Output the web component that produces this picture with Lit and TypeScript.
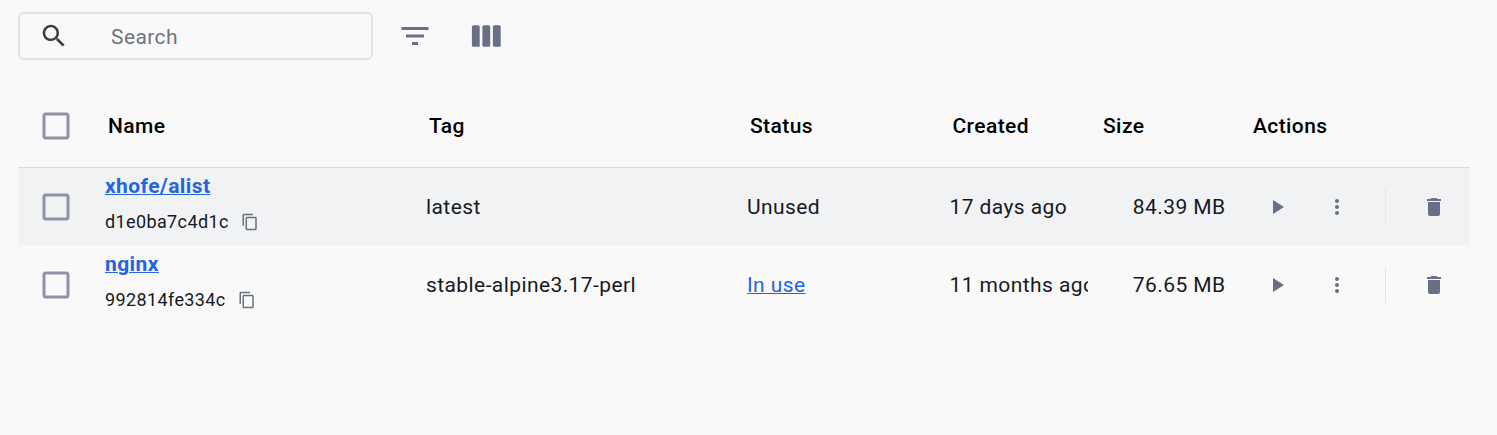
import { LitElement, html, css, svg } from "lit";
import { customElement, property } from "lit/decorators.js";

const ICONS = {
  search: svg`<path d="M15.5 14h-.79l-.28-.27C15.41 12.59 16 11.11 16 9.5 16 5.91 13.09 3 9.5 3S3 5.91 3 9.5 5.91 16 9.5 16c1.61 0 3.09-.59 4.23-1.57l.27.28v.79l5 4.99L20.49 19l-4.99-5zm-6 0C7.01 14 5 11.99 5 9.5S7.01 5 9.5 5 14 7.01 14 9.5 11.99 14 9.5 14z"/>`,
  filter: svg`<path d="M10 18h4v-2h-4v2zM3 6v2h18V6H3zm3 7h12v-2H6v2z"/>`,
  columns: svg`<rect x="2.6" y="4.9" width="5.2" height="14.2" rx="1"/><rect x="9.6" y="4.9" width="5.2" height="14.2" rx="1"/><rect x="16.6" y="4.9" width="5.2" height="14.2" rx="1"/>`,
  box: svg`<path d="M19 5v14H5V5h14m0-2H5c-1.1 0-2 .9-2 2v14c0 1.1.9 2 2 2h14c1.1 0 2-.9 2-2V5c0-1.1-.9-2-2-2z"/>`,
  copy: svg`<path d="M16 1H4c-1.1 0-2 .9-2 2v14h2V3h12V1zm3 4H8c-1.1 0-2 .9-2 2v14c0 1.1.9 2 2 2h11c1.1 0 2-.9 2-2V7c0-1.1-.9-2-2-2zm0 16H8V7h11v14z"/>`,
  play: svg`<path d="M8 5v14l11-7z"/>`,
  more: svg`<path d="M12 8c1.1 0 2-.9 2-2s-.9-2-2-2-2 .9-2 2 .9 2 2 2zm0 2c-1.1 0-2 .9-2 2s.9 2 2 2 2-.9 2-2-.9-2-2-2zm0 6c-1.1 0-2 .9-2 2s.9 2 2 2 2-.9 2-2-.9-2-2-2z"/>`,
  trash: svg`<path d="M6 19c0 1.1.9 2 2 2h8c1.1 0 2-.9 2-2V7H6v12zM19 4h-3.5l-1-1h-5l-1 1H5v2h14V4z"/>`,
};

@customElement("ui-icon")
export class UiIcon extends LitElement {
  @property() name: keyof typeof ICONS = "search";
  static styles = css`
    :host { display: block; flex: none; width: 24px; height: 24px; }
    svg { display: block; width: 100%; height: 100%; fill: currentColor; }
  `;
  render() {
    return html`<svg viewBox="0 0 24 24" aria-hidden="true">${ICONS[this.name]}</svg>`;
  }
}

interface ImageRow {
  name: string;
  id: string;
  tag: string;
  status: string;
  created: string;
  size: string;
  active?: boolean;
}

const ROWS: ImageRow[] = [
  { name: "xhofe/alist", id: "d1e0ba7c4d1c", tag: "latest", status: "Unused", created: "17 days ago", size: "84.39 MB", active: true },
  { name: "nginx", id: "992814fe334c", tag: "stable-alpine3.17-perl", status: "In use", created: "11 months ago", size: "76.65 MB" },
];

@customElement("app-root")
export class AppRoot extends LitElement {
  static styles = css`
    :host {
      display: block;
      box-sizing: border-box;
      height: 435px;
      padding: 12px 27px 0 18px;
      overflow: hidden;
      background: #f9f9fa;
      color: #17191e;
      font: 400 21px/30px Roboto, sans-serif;
      letter-spacing: 0.41px;
      white-space: nowrap;
    }
    .toolbar { display: flex; align-items: center; height: 48px; color: #696f85; }
    .search {
      display: flex; align-items: center; box-sizing: border-box;
      width: 355px; height: 48px; padding-left: 19px;
      border: 2px solid #e1e2e4; border-radius: 6px;
    }
    .search ui-icon { width: 30px; height: 30px; color: #393c42; }
    .placeholder { margin-left: 42px; padding-top: 2px; color: #6f747f; }
    .tool { width: 36px; height: 36px; margin-left: 24px; }
    .tool + .tool { margin-left: 35px; }
    .row {
      display: grid; align-items: center; height: 78px;
      grid-template-columns: 72px 321px 321px 202.5px 150.5px 150px 235px;
    }
    .head {
      height: 83px; margin-top: 25px; padding-bottom: 1px; box-sizing: border-box;
      border-bottom: 1px solid #d8dadd;
      color: #000; font-weight: 500;
    }
    .active { background: linear-gradient(#f0f2f4, #f0f2f4) 0 0 / 100% 77px no-repeat; }
    .cell { padding-left: 15px; }
    .head .cell { padding-left: 18px; }
    .check { width: 36px; height: 36px; margin-left: 20px; color: #8f93a4; }
    .identity { padding-bottom: 6px; }
    .name { display: block; height: 36px; line-height: 36px; font-weight: 700; }
    .link { color: #2463e4; text-decoration: underline; text-decoration-thickness: 1px; text-underline-offset: 1px; }
    .id { display: flex; align-items: center; height: 36px; font-size: 18px; letter-spacing: 0.38px; }
    .id ui-icon { width: 18px; height: 18px; margin-left: 12px; color: #696f85; }
    .created { width: 138.5px; overflow: hidden; }
    .size { text-align: right; padding-right: 9.5px; }
    .actions { display: flex; align-items: center; padding-left: 30px; color: #696f85; }
    .more { margin-left: 36px; }
    .divider { width: 1px; height: 36px; margin: 0 36px; background: #e1e4e9; }
  `;

  private row(r: ImageRow) {
    return html`<div class="row ${r.active ? "active" : ""}">
      <ui-icon class="check" name="box"></ui-icon>
      <div class="cell identity">
        <span class="name"><span class="link">${r.name}</span></span>
        <div class="id"><span>${r.id}</span><ui-icon name="copy"></ui-icon></div>
      </div>
      <div class="cell">${r.tag}</div>
      <div class="cell"><span class=${r.status === "In use" ? "link" : ""}>${r.status}</span></div>
      <div class="cell created">${r.created}</div>
      <div class="size">${r.size}</div>
      <div class="actions">
        <ui-icon name="play"></ui-icon>
        <ui-icon class="more" name="more"></ui-icon>
        <span class="divider"></span>
        <ui-icon name="trash"></ui-icon>
      </div>
    </div>`;
  }

  render() {
    return html`
      <div class="toolbar">
        <div class="search"><ui-icon name="search"></ui-icon><span class="placeholder">Search</span></div>
        <ui-icon class="tool" name="filter"></ui-icon>
        <ui-icon class="tool" name="columns"></ui-icon>
      </div>
      <div class="row head">
        <ui-icon class="check" name="box"></ui-icon>
        ${["Name", "Tag", "Status", "Created", "Size", "Actions"].map((t) => html`<div class="cell">${t}</div>`)}
      </div>
      ${ROWS.map((r) => this.row(r))}
    `;
  }
}
